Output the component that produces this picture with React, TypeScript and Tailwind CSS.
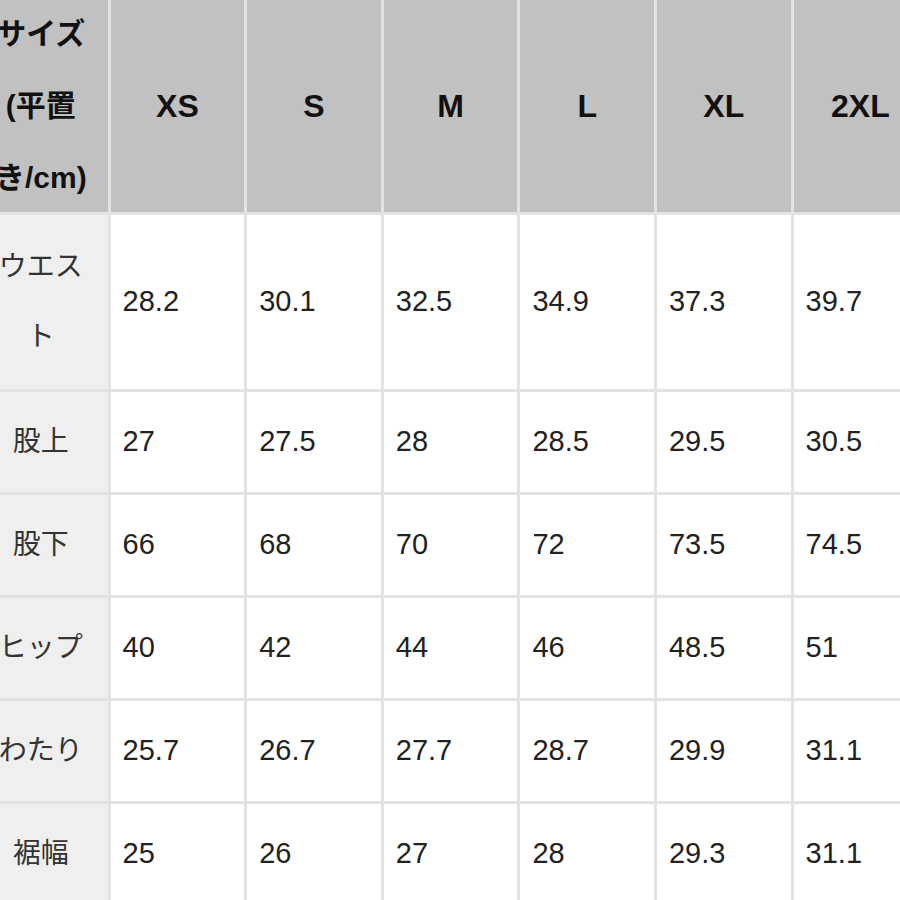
const sizes = ["XS", "S", "M", "L", "XL", "2XL"];

const rows: { label: React.ReactNode; values: string[] }[] = [
  { label: "ウエスト", values: ["28.2", "30.1", "32.5", "34.9", "37.3", "39.7"] },
  { label: "股上", values: ["27", "27.5", "28", "28.5", "29.5", "30.5"] },
  { label: "股下", values: ["66", "68", "70", "72", "73.5", "74.5"] },
  { label: "ヒップ", values: ["40", "42", "44", "46", "48.5", "51"] },
  { label: "わたり", values: ["25.7", "26.7", "27.7", "28.7", "29.9", "31.1"] },
  { label: "裾幅", values: ["25", "26", "27", "28", "29.3", "31.1"] },
];

export default function App() {
  return (
    <div
      className="w-[900px] h-[900px] overflow-hidden bg-white"
      style={{ fontFamily: '"Liberation Sans", "Noto Sans CJK JP", sans-serif' }}
    >
      <div className="ml-[-26px] w-[955px] grid grid-cols-[repeat(7,133.6px)] grid-rows-[212px_174px_100px_100px_100px_100px_100px] gap-[3px] bg-[#e3e3e3]">
        {/* Header */}
        <div className="bg-[#c1c1c1] flex items-center justify-center text-center text-[30px] leading-[72px] font-bold text-[#111]">
          <span>
            サイズ
            <br />
            (平置
            <br />
            き/cm)
          </span>
        </div>
        {sizes.map((s) => (
          <div
            key={s}
            className="bg-[#c1c1c1] flex items-center justify-center text-[32px] font-bold text-[#111]"
          >
            {s}
          </div>
        ))}

        {/* Body */}
        {rows.map((row, i) => (
          <Row key={i} label={row.label} values={row.values} />
        ))}
      </div>
    </div>
  );
}

function Row({ label, values }: { label: React.ReactNode; values: string[] }) {
  return (
    <>
      <div className="bg-[#efefef] flex items-center justify-center px-3 text-center text-[28px] leading-[70px] text-[#333]">
        <span>{label}</span>
      </div>
      {values.map((v, j) => (
        <div key={j} className="bg-white flex items-center pl-3 text-[29px] text-[#222]">
          {v}
        </div>
      ))}
    </>
  );
}
